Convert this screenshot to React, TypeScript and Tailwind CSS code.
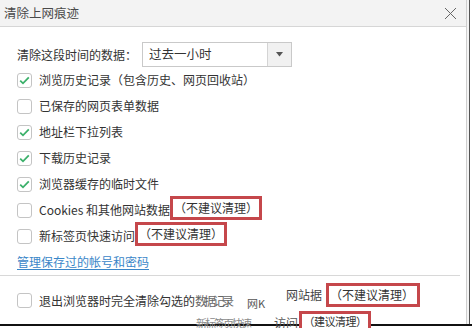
import React from 'react';

const items: { label: string; checked: boolean; note?: boolean }[] = [
  { label: '浏览历史记录（包含历史、网页回收站）', checked: true },
  { label: '已保存的网页表单数据', checked: false },
  { label: '地址栏下拉列表', checked: true },
  { label: '下载历史记录', checked: true },
  { label: '浏览器缓存的临时文件', checked: true },
  { label: 'Cookies 和其他网站数据', checked: false, note: true },
  { label: '新标签页快速访问', checked: false, note: true },
];

const Box: React.FC<{ checked: boolean }> = ({ checked }) => (
  <span className="w-[15px] h-[15px] shrink-0 rounded-[3px] border border-[#c4c4c4] bg-white flex items-center justify-center">
    {checked && (
      <svg width="11" height="9" viewBox="0 0 11 9">
        <path d="M1.2 4.6 L4 7.3 L9.8 1.4" fill="none" stroke="#3bb06a" strokeWidth="1.8" />
      </svg>
    )}
  </span>
);

const Note: React.FC<{ text: string }> = ({ text }) => (
  <span className="h-[24px] border-[3px] border-[#c5474b] flex items-center px-[1px] -mt-[4px]">{text}</span>
);

const App: React.FC = () => {
  return (
    <div className="w-[472px] h-[328px] relative overflow-hidden bg-white text-[12px] text-[#333] font-['Noto_Sans_CJK_SC',sans-serif] leading-none">
      <div className="flex h-[324px]">
        <div className="w-[467px] flex flex-col border-r border-[#cfcfcf]">
          <div className="h-[27px] bg-[#f3f3f3] border-b border-[#d6d6d6] flex items-center justify-between pl-[4px] pr-[9px]">
            <span className="text-[12.5px] text-[#4a4a4a]">清除上网痕迹</span>
            <svg width="13" height="13" viewBox="0 0 13 13">
              <path d="M1 1 L12 12 M12 1 L1 12" stroke="#666" strokeWidth="1" />
            </svg>
          </div>

          <div className="px-[17px] pt-[15px]">
            <div className="flex items-center h-[25px]">
              <span className="w-[125px]">清除这段时间的数据：</span>
              <div className="w-[150px] h-[25px] border border-[#c9c9c9] flex">
                <span className="flex-1 flex items-center px-[6px] text-[12.5px]">过去一小时</span>
                <span className="w-[24px] bg-[#f1f1f1] border-l border-[#d4d4d4] flex items-center justify-center">
                  <svg width="7" height="5" viewBox="0 0 7 5">
                    <path d="M0 0 H7 L3.5 4.5 Z" fill="#555" />
                  </svg>
                </span>
              </div>
            </div>

            <div className="flex flex-col">
              {items.map((it) => (
                <div key={it.label} className="h-[26px] flex items-center">
                  <Box checked={it.checked} />
                  <span className="ml-[7px]">{it.label}</span>
                  {it.note && <Note text="（不建议清理）" />}
                </div>
              ))}
              <div className="h-[26px] flex items-center">
                <span className="text-[#3a86c8] underline underline-offset-2">管理保存过的帐号和密码</span>
              </div>
            </div>
          </div>

          <div className="border-t border-[#d8d8d8] mr-[6px]" />

          <div className="px-[17px] pt-[17px] flex items-center">
            <Box checked={false} />
            <span className="ml-[7px]">退出浏览器时完全清除勾选的</span>
            <span className="text-[#666] tracking-[-3px]">数据记录</span>
          </div>
        </div>
        <div className="w-[2px] bg-[#f4f4f4]" />
        <div className="w-[1px] bg-[#555]" />
      </div>
      <div className="h-[2px] bg-[#111]" />

      <span className="absolute left-[247px] top-[298px] text-[11px] text-[#555]">网K</span>
      <span className="absolute left-[286px] top-[289px] text-[#444]">网站据</span>
      <span className="absolute left-[326px] top-[283px] w-[94px] h-[24px] border-[3px] border-[#c5474b] bg-white flex items-center px-[1px]">
        （不建议清理）
      </span>
      <span className="absolute left-[196px] top-[318px] text-[11px] text-[#8a8a8a] tracking-[-2px]">新标签页快速</span>
      <span className="absolute left-[274px] top-[317px] text-[#555]">访问</span>
      <span className="absolute left-[299px] top-[311px] w-[72px] h-[20px] border-[3px] border-[#c5474b] bg-white flex items-start justify-center pt-[2px] text-[11px] tracking-[-0.5px]">
        （建议清理）
      </span>
    </div>
  );
};

export default App;
